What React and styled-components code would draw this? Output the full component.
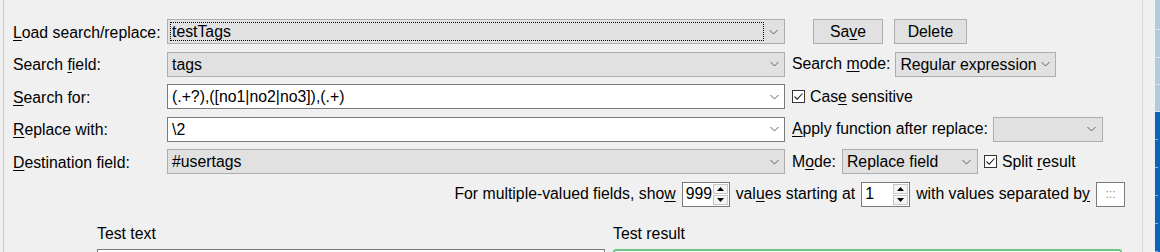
import React from "react";
import styled, { createGlobalStyle } from "styled-components";

const Global = createGlobalStyle`
  html, body { margin: 0; padding: 0; background: #f0f0f0; }
  body { font-family: "Liberation Sans", Arial, sans-serif; font-size: 15.8px; color: #000; }
`;

const Page = styled.div`
  display: flex;
  width: 1160px;
  height: 252px;
  overflow: hidden;
  background: #f0f0f0;
`;

const LeftEdge = styled.div`
  width: 3px;
  border-right: 1px solid #c9c9c9;
  flex: none;
`;

const Main = styled.div`
  flex: 1;
  padding: 10px 17px 0 9px;
  display: flex;
  flex-direction: column;
  min-width: 0;
`;

const Rule = styled.div`
  height: 1px;
  background: #a4a4a4;
`;

const FormGrid = styled.div`
  margin-top: 9px;
  display: grid;
  grid-template-columns: 154px 618px 1fr;
  grid-auto-rows: 25px;
  row-gap: 7.6px;
  align-items: center;
`;

const Label = styled.span`
  white-space: nowrap;
  line-height: 25px;
  padding-top: 1px;
`;

const Side = styled.div`
  display: flex;
  align-items: center;
  height: 25px;
  padding-left: ${(p) => p.$pad ?? 7}px;
  gap: ${(p) => p.$gap ?? 5}px;
  white-space: nowrap;
`;

const ComboBox = styled.div`
  box-sizing: border-box;
  height: 25px;
  width: ${(p) => (p.$width ? `${p.$width}px` : "100%")};
  display: flex;
  align-items: stretch;
  padding: 2px;
  border: 1px solid ${(p) => (p.$white ? "#7a7a7a" : "#adadad")};
  background: ${(p) => (p.$white ? "#ffffff" : "#e1e1e1")};
  flex: none;
`;

const ComboText = styled.div`
  flex: 1;
  display: flex;
  align-items: center;
  padding-left: 1px;
  border: 1px ${(p) => (p.$focus ? "dotted #000" : "solid transparent")};
  white-space: nowrap;
  overflow: hidden;
  line-height: 17px;
`;

const ChevronBox = styled.div`
  width: ${(p) => p.$w ?? 16}px;
  display: flex;
  align-items: center;
  justify-content: center;
  flex: none;
`;

const Chevron = ({ w }) => (
  <ChevronBox $w={w}>
    <svg width="9" height="6" viewBox="0 0 9 6">
      <path d="M0.5 1 L4.5 5 L8.5 1" fill="none" stroke="#606060" strokeWidth="1" />
    </svg>
  </ChevronBox>
);

const Combo = ({ children, white, focus, width, chevW }) => (
  <ComboBox $white={white} $width={width}>
    <ComboText $focus={focus}>{children}</ComboText>
    <Chevron w={chevW} />
  </ComboBox>
);

const Button = styled.div`
  box-sizing: border-box;
  height: 25px;
  width: ${(p) => p.$width}px;
  border: 1px solid #adadad;
  background: #e1e1e1;
  display: flex;
  align-items: center;
  justify-content: center;
  flex: none;
`;

const U = styled.span`
  text-decoration: underline;
  text-underline-offset: 2px;
`;

const CheckBoxBox = styled.span`
  box-sizing: border-box;
  width: 13px;
  height: 13px;
  border: 1px solid #333;
  background: #fff;
  display: inline-flex;
  align-items: center;
  justify-content: center;
  flex: none;
`;

const Check = styled.label`
  display: flex;
  align-items: center;
  gap: 5px;
  white-space: nowrap;
`;

const CheckBox = ({ children }) => (
  <Check>
    <CheckBoxBox>
      <svg width="11" height="11" viewBox="0 0 11 11">
        <path d="M1.5 5.5 L4.2 8.2 L9.5 2.5" fill="none" stroke="#222" strokeWidth="1.1" />
      </svg>
    </CheckBoxBox>
    <span>{children}</span>
  </Check>
);

const MultiRow = styled.div`
  margin-top: 7.5px;
  height: 25px;
  display: flex;
  align-items: center;
  justify-content: flex-end;
  gap: 6px;
  white-space: nowrap;
`;

const SpinBox = styled.div`
  box-sizing: border-box;
  width: ${(p) => p.$width}px;
  height: 25px;
  border: 1px solid #7a7a7a;
  background: #fff;
  display: flex;
  align-items: stretch;
  flex: none;
`;

const SpinValue = styled.div`
  flex: 1;
  display: flex;
  align-items: center;
  padding-left: 3px;
`;

const SpinButtons = styled.div`
  width: 15px;
  display: flex;
  flex-direction: column;
  padding: 1px 1px 1px 0;
  gap: 1px;
`;

const SpinBtn = styled.div`
  flex: 1;
  border: 1px solid #c8c8c8;
  background: #f4f4f4;
  display: flex;
  align-items: center;
  justify-content: center;
`;

const Spin = ({ value, width }) => (
  <SpinBox $width={width}>
    <SpinValue>{value}</SpinValue>
    <SpinButtons>
      <SpinBtn>
        <svg width="7" height="4" viewBox="0 0 7 4"><path d="M0 4 L3.5 0 L7 4 Z" fill="#000" /></svg>
      </SpinBtn>
      <SpinBtn>
        <svg width="7" height="4" viewBox="0 0 7 4"><path d="M0 0 L3.5 4 L7 0 Z" fill="#000" /></svg>
      </SpinBtn>
    </SpinButtons>
  </SpinBox>
);

const SepBox = styled.div`
  box-sizing: border-box;
  width: 29px;
  height: 25px;
  border: 1px solid #7a7a7a;
  background: #fff;
  color: #8c8c8c;
  font-size: 12px;
  display: flex;
  align-items: center;
  justify-content: center;
  flex: none;
`;

const TestArea = styled.div`
  margin-top: 16px;
  padding-left: 84px;
  display: grid;
  grid-template-columns: 508px 509px;
  column-gap: 8px;
  row-gap: 6px;
`;

const TestLabel = styled.div`
  line-height: 19px;
  padding-top: 1px;
`;

const TextBox = styled.div`
  box-sizing: border-box;
  height: 60px;
  background: #fff;
  border: ${(p) => (p.$ok ? "2px solid #6fc481" : "1px solid #7a7a7a")};
  border-radius: ${(p) => (p.$ok ? "3px" : "0")};
`;

const RightEdge = styled.div`
  width: 1px;
  background: #d8d8d8;
  flex: none;
`;

const Gap = styled.div`
  width: 12px;
  flex: none;
`;

const Strip = styled.div`
  width: 5px;
  flex: none;
  display: flex;
  flex-direction: column;
`;

const StripLight = styled.div`
  height: ${(p) => p.$h}px;
  background: #b2c9e2;
  border-bottom: 1px solid #d6e2ef;
  box-sizing: border-box;
`;

const StripDark = styled.div`
  flex: 1;
  background-color: #0a63bf;
  background-image: repeating-linear-gradient(
    to bottom,
    transparent 0 27px,
    #8fb2da 27px 28px
  );
  background-size: 3px 100%;
  background-repeat: no-repeat;
`;

export default function App() {
  return (
    <Page>
      <Global />
      <LeftEdge />
      <Main>
        <Rule />
        <FormGrid>
          <Label><U>L</U>oad search/replace:</Label>
          <Combo focus chevW={18}>testTags</Combo>
          <Side $pad={28} $gap={11}>
            <Button $width={70}><span>Sa<U>v</U>e</span></Button>
            <Button $width={73}>Delete</Button>
          </Side>

          <Label>Search <U>f</U>ield:</Label>
          <Combo>tags</Combo>
          <Side>
            <span>Search <U>m</U>ode:</span>
            <Combo width={161}>Regular expression</Combo>
          </Side>

          <Label><U>S</U>earch for:</Label>
          <Combo white>(.+?),([no1|no2|no3]),(.+)</Combo>
          <Side>
            <CheckBox>Cas<U>e</U> sensitive</CheckBox>
          </Side>

          <Label><U>R</U>eplace with:</Label>
          <Combo white>\2</Combo>
          <Side>
            <span><U>A</U>pply function after replace:</span>
            <Combo width={110}></Combo>
          </Side>

          <Label><U>D</U>estination field:</Label>
          <Combo>#usertags</Combo>
          <Side $gap={6}>
            <span>M<U>o</U>de:</span>
            <Combo width={136}>Replace field</Combo>
            <CheckBox>Split <U>r</U>esult</CheckBox>
          </Side>
        </FormGrid>

        <MultiRow>
          <span>For multiple-valued fields, sho<U>w</U></span>
          <Spin value="999" width={48} />
          <span>val<U>u</U>es starting at</span>
          <Spin value="1" width={49} />
          <span>with values separated b<U>y</U></span>
          <SepBox>:::</SepBox>
        </MultiRow>

        <TestArea>
          <TestLabel>Test text</TestLabel>
          <TestLabel>Test result</TestLabel>
          <TextBox />
          <TextBox $ok />
        </TestArea>
      </Main>
      <RightEdge />
      <Gap />
      <Strip>
        <StripLight $h={30} />
        <StripLight $h={28} />
        <StripLight $h={27} />
        <StripLight $h={27} />
        <StripDark />
      </Strip>
    </Page>
  );
}
